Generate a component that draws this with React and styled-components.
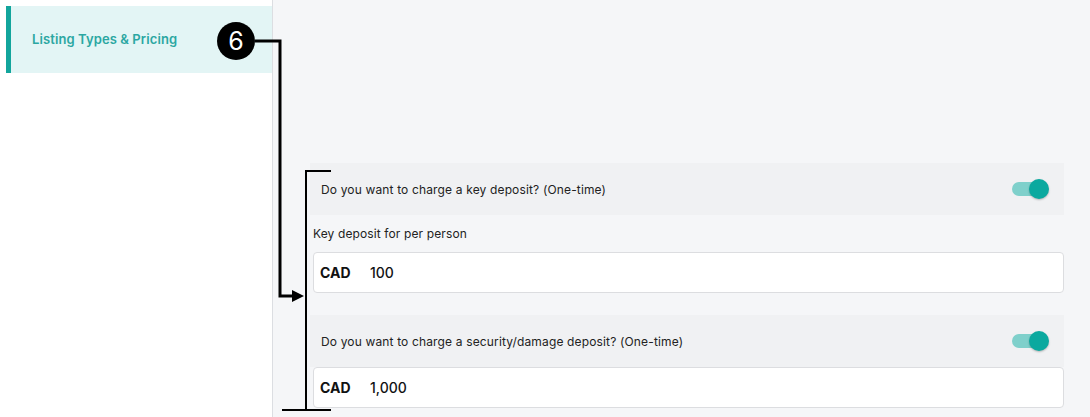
import React, { useState } from 'react';
import styled, { createGlobalStyle } from 'styled-components';

const GlobalStyle = createGlobalStyle`
    html, body {
        margin: 0;
        padding: 0;
        font-family: Inter, "Noto Sans", sans-serif;
        background: #f5f6f8;
    }
`

const deposits = [
    { question: "Do you want to charge a key deposit? (One-time)", label: "Key deposit for per person", value: "100" },
    { question: "Do you want to charge a security/damage deposit? (One-time)", label: null, value: "1,000" },
]

const Toggle = ({ on, onClick }) => (
    <ToggleTrack onClick={onClick} $on={on}>
        <ToggleKnob $on={on} />
    </ToggleTrack>
)

const App = () => {
    const [enabled, setEnabled] = useState([true, true]);

    const flip = (i) => {
        setEnabled(enabled.map((v, idx) => idx === i ? !v : v));
    }

    return (
        <Page>
            <GlobalStyle />
            <Sidebar>
                <NavItem $active>Listing Types &amp; Pricing</NavItem>
            </Sidebar>
            <Main>
                <Form>
                    {deposits.map((d, i) => (
                        <Section key={i} $first={i === 0}>
                            <QuestionRow>
                                <Question>{d.question}</Question>
                                <Toggle on={enabled[i]} onClick={() => flip(i)} />
                            </QuestionRow>
                            {d.label && <FieldLabel>{d.label}</FieldLabel>}
                            <InputBox>
                                <Currency>CAD</Currency>
                                <Amount defaultValue={d.value} />
                            </InputBox>
                        </Section>
                    ))}
                </Form>
            </Main>

            <Badge>6</Badge>
            <Annotation width="1090" height="417" viewBox="0 0 1090 417">
                <polyline points="255,41 280,41 280,296 294,296" fill="none" stroke="#000" strokeWidth="3" />
                <polygon points="292,290 304,296 292,302" fill="#000" />
                <polyline points="331,171 306,171 306,410" fill="none" stroke="#000" strokeWidth="2" />
                <line x1="282" y1="410" x2="331" y2="410" stroke="#000" strokeWidth="2" />
            </Annotation>
        </Page>
    )
}

const Page = styled.div`
    position: relative;
    display: flex;
    width: 1090px;
    height: 417px;
    overflow: hidden;
    background: #f5f6f8;
`

const Sidebar = styled.div`
    width: 266px;
    flex-shrink: 0;
    background: #ffffff;
    border-right: 1px solid #dcdee2;
    padding: 6px 0 0 6px;
`

const NavItem = styled.div`
    height: 67px;
    display: flex;
    align-items: center;
    padding-left: 21px;
    border-left: 5px solid #12a59c;
    background: ${p => p.$active ? "#e3f5f5" : "transparent"};
    color: #2ba7a2;
    font-size: 13px;
    font-weight: 600;
    letter-spacing: 0.1px;
    padding-bottom: 1px;
    box-sizing: border-box;
`

const Main = styled.div`
    flex: 1;
    padding: 163px 26px 0 40px;
`

const Form = styled.div`
    display: flex;
    flex-direction: column;
`

const Section = styled.div`
    display: flex;
    flex-direction: column;
    margin-top: ${p => p.$first ? "0" : "22px"};
`

const QuestionRow = styled.div`
    height: 52px;
    display: flex;
    align-items: center;
    justify-content: space-between;
    background: #f0f1f3;
    padding: 0 16px 0 11px;
    margin-left: -3px;
`

const Question = styled.span`
    font-size: 12px;
    letter-spacing: 0.15px;
    color: #222;
`

const ToggleTrack = styled.div`
    position: relative;
    width: 36px;
    height: 14px;
    border-radius: 7px;
    background: ${p => p.$on ? "#7fd0cb" : "#c9cbcf"};
    cursor: pointer;
`

const ToggleKnob = styled.div`
    position: absolute;
    top: -3px;
    left: ${p => p.$on ? "17px" : "-2px"};
    width: 20px;
    height: 20px;
    border-radius: 50%;
    background: ${p => p.$on ? "#0ba99f" : "#f2f2f2"};
    box-shadow: 0 1px 2px rgba(0, 0, 0, 0.25);
`

const FieldLabel = styled.div`
    font-size: 12px;
    letter-spacing: 0.12px;
    color: #222;
    margin: 11px 0 11px;
`

const InputBox = styled.div`
    height: 41px;
    display: flex;
    align-items: center;
    background: #ffffff;
    border: 1px solid #dcdde0;
    border-radius: 4px;
    box-sizing: border-box;
    padding-left: 6px;
`

const Currency = styled.span`
    font-size: 14px;
    font-weight: 700;
    color: #111;
    width: 50px;
`

const Amount = styled.input`
    border: none;
    outline: none;
    font-family: inherit;
    font-size: 14px;
    font-weight: 500;
    color: #111;
    background: transparent;
    padding: 0;
    flex: 1;
`

const Badge = styled.div`
    position: absolute;
    left: 217px;
    top: 22px;
    width: 38px;
    height: 38px;
    border-radius: 50%;
    background: #000;
    color: #fff;
    display: flex;
    align-items: center;
    justify-content: center;
    font-size: 25px;
    font-weight: 400;
    z-index: 2;
`

const Annotation = styled.svg`
    position: absolute;
    left: 0;
    top: 0;
    pointer-events: none;
`

export default App;
